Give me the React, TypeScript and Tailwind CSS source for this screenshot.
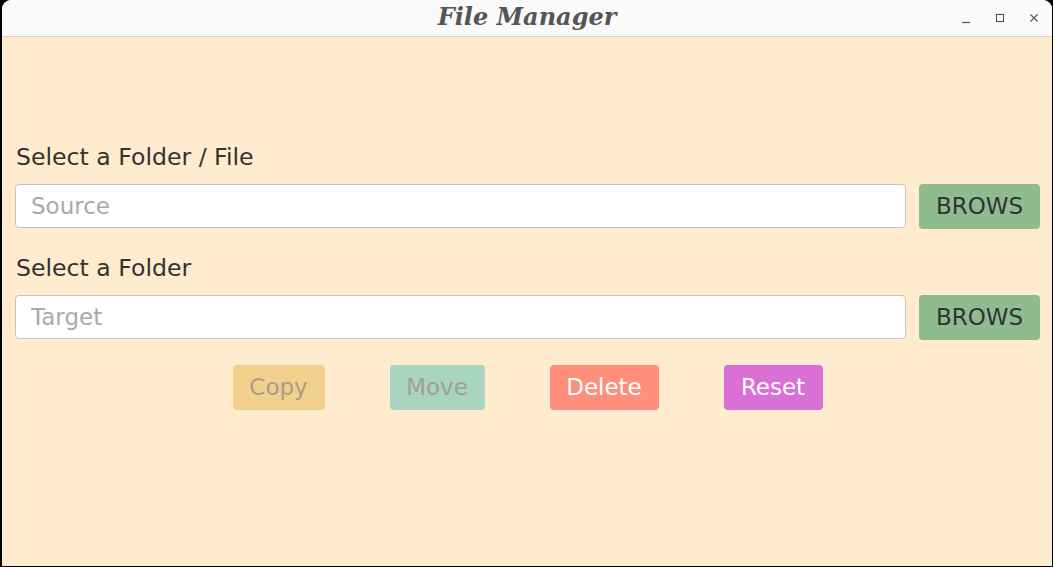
import { useState } from "react";

const SANS = "font-['DejaVu_Sans','Noto_Sans',sans-serif]";

function WindowControls() {
  return (
    <div className="absolute right-0 top-0 flex h-[36px] items-center gap-[22px] pr-[12px] text-[#555]">
      <svg width="12" height="12" viewBox="0 0 12 12">
        <path d="M2 10.5H10" stroke="currentColor" strokeWidth="1.2" />
      </svg>
      <svg width="12" height="12" viewBox="0 0 12 12">
        <rect x="2.5" y="2.5" width="7" height="7" fill="none" stroke="currentColor" strokeWidth="1.1" />
      </svg>
      <svg width="12" height="12" viewBox="0 0 12 12">
        <path d="M2.5 2.5L9.5 9.5M9.5 2.5L2.5 9.5" stroke="currentColor" strokeWidth="1.1" />
      </svg>
    </div>
  );
}

function PathRow({ label, placeholder }: { label: string; placeholder: string }) {
  const [value, setValue] = useState("");
  return (
    <div className="flex flex-col">
      <label className="mb-[13px] ml-[1px] pt-[1px] text-[23.6px] leading-[27px] text-[#333]">{label}</label>
      <div className="flex items-start gap-[13px]">
        <input
          type="text"
          value={value}
          onChange={e => setValue(e.target.value)}
          placeholder={placeholder}
          className="h-[44px] flex-1 rounded-[4px] border border-[#c4c4c4] bg-white pl-[15px] text-[23px] text-[#333] placeholder:text-[#aaa] focus:outline-none"
        />
        <button className="h-[45px] w-[121px] rounded-[4px] bg-[#8fbc8f] text-[23px] text-[#333]">BROWS</button>
      </div>
    </div>
  );
}

export default function App() {
  return (
    <div className="flex h-[567px] w-[1053px] flex-col bg-black pb-[1px] pl-[2px] pr-[1px]">
      <div className={`flex flex-1 flex-col overflow-hidden rounded-t-[9px] bg-[#ffebcd] ${SANS}`}>
        {/* Title bar */}
        <div className="relative flex h-[37px] items-center justify-center border-b border-[#d2d2d2] bg-[#fafafa]">
          <h1 className="pb-[3px] font-['DejaVu_Serif',serif] text-[24px] font-bold italic text-[#555]">File Manager</h1>
          <WindowControls />
        </div>

        {/* Body */}
        <div className="flex flex-col gap-[25px] pl-[13px] pr-[12px] pt-[106px]">
          <PathRow label="Select a Folder / File" placeholder="Source" />
          <PathRow label="Select a Folder" placeholder="Target" />
          <div className="flex justify-center gap-[65px]">
            <button disabled className="h-[45px] w-[92px] rounded-[4px] bg-[#f0d08b] text-[23px] text-[#aa9e8c]">Copy</button>
            <button disabled className="h-[45px] w-[95px] rounded-[4px] bg-[#a8d5c1] text-[23px] text-[#a59d93]">Move</button>
            <button className="h-[45px] w-[109px] rounded-[4px] bg-[#ff8e7b] text-[23px] text-white">Delete</button>
            <button className="h-[45px] w-[99px] rounded-[4px] bg-[#da70d6] text-[23px] text-white">Reset</button>
          </div>
        </div>
      </div>
    </div>
  );
}
